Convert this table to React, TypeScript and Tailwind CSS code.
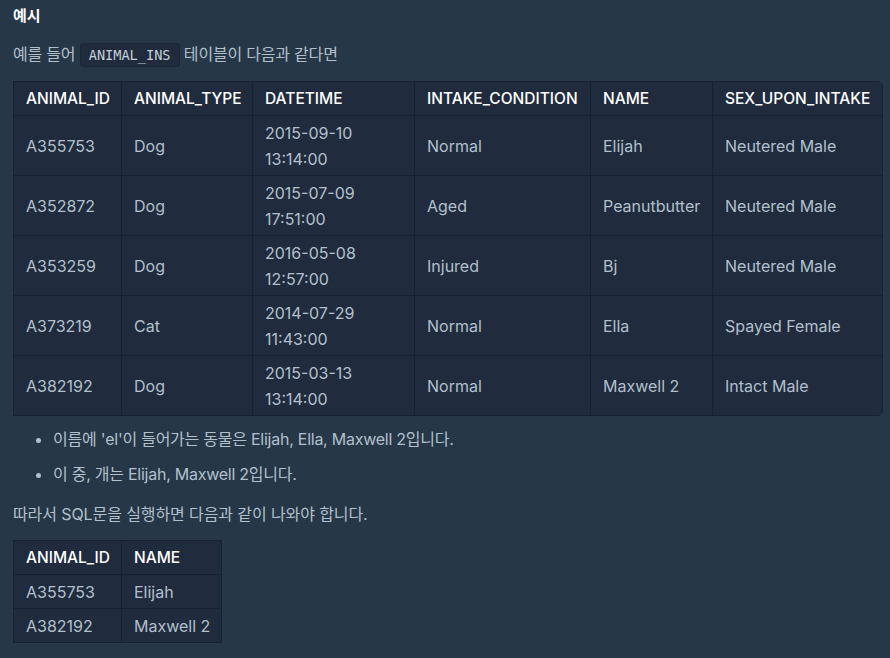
const rows = [
  { id: "A355753", type: "Dog", date: "2015-09-10", time: "13:14:00", cond: "Normal", name: "Elijah", sex: "Neutered Male" },
  { id: "A352872", type: "Dog", date: "2015-07-09", time: "17:51:00", cond: "Aged", name: "Peanutbutter", sex: "Neutered Male" },
  { id: "A353259", type: "Dog", date: "2016-05-08", time: "12:57:00", cond: "Injured", name: "Bj", sex: "Neutered Male" },
  { id: "A373219", type: "Cat", date: "2014-07-29", time: "11:43:00", cond: "Normal", name: "Ella", sex: "Spayed Female" },
  { id: "A382192", type: "Dog", date: "2015-03-13", time: "13:14:00", cond: "Normal", name: "Maxwell 2", sex: "Intact Male" },
];

const headers = ["ANIMAL_ID", "ANIMAL_TYPE", "DATETIME", "INTAKE_CONDITION", "NAME", "SEX_UPON_INTAKE"];
const widths = ["w-[108px]", "w-[131px]", "w-[162px]", "w-[176px]", "w-[122px]", "w-[170px]"];

const th = "border border-[#172130] px-[12px] py-[3.5px] text-left font-medium text-[15.5px] text-white leading-[26px] whitespace-nowrap";
const td = "border border-[#172130] px-[12px] py-[3.5px] text-left leading-[26px] whitespace-nowrap";

export default function App() {
  return (
    <div
      className="min-h-[658px] w-[890px] bg-[#263747] px-[13px] pt-[4px] text-[16px] text-[#b2c0cc]"
      style={{ fontFamily: "Inter, 'Noto Sans CJK KR', sans-serif" }}
    >
      <h5 className="font-bold text-white leading-[24px] text-[15px]">예시</h5>

      <p className="mt-[13px] leading-[26px] tracking-[-0.2px]">
        예를 들어{" "}
        <code className="rounded-[4px] border border-[#1b2636] bg-[#202b3d] px-[8px] py-[3px] font-['DejaVu_Sans_Mono',monospace] text-[13.6px] tracking-normal text-[#c4d0da]">
          ANIMAL_INS
        </code>{" "}
        테이블이 다음과 같다면
      </p>

      <div className="mt-[13px] w-[870px] overflow-hidden rounded-tr-[6px] rounded-br-[6px]">
        <table className="w-[870px] table-fixed border-collapse bg-[#202b3d]">
          <colgroup>
            {widths.map((w, i) => (
              <col key={i} className={w} />
            ))}
          </colgroup>
          <thead>
            <tr>
              {headers.map((h) => (
                <th key={h} className={th}>
                  {h}
                </th>
              ))}
            </tr>
          </thead>
          <tbody>
            {rows.map((r) => (
              <tr key={r.id}>
                <td className={td}>{r.id}</td>
                <td className={td}>{r.type}</td>
                <td className={td}>
                  {r.date}
                  <br />
                  {r.time}
                </td>
                <td className={td}>{r.cond}</td>
                <td className={td}>{r.name}</td>
                <td className={td}>{r.sex}</td>
              </tr>
            ))}
          </tbody>
        </table>
      </div>

      <ul className="mt-[10px] list-disc pl-[40px] leading-[26px] tracking-[-0.25px] marker:text-[#b2c0cc]">
        <li>이름에 'el'이 들어가는 동물은 Elijah, Ella, Maxwell 2입니다.</li>
        <li className="mt-[9px]">이 중, 개는 Elijah, Maxwell 2입니다.</li>
      </ul>

      <p className="mt-[14px] leading-[26px] tracking-[-0.1px]">따라서 SQL문을 실행하면 다음과 같이 나와야 합니다.</p>

      <table className="mt-[13px] w-[208px] table-fixed border-collapse bg-[#202b3d]">
        <colgroup>
          <col className="w-[108px]" />
          <col className="w-[100px]" />
        </colgroup>
        <thead>
          <tr>
            <th className={th}>ANIMAL_ID</th>
            <th className={th}>NAME</th>
          </tr>
        </thead>
        <tbody>
          <tr>
            <td className={td}>A355753</td>
            <td className={td}>Elijah</td>
          </tr>
          <tr>
            <td className={td}>A382192</td>
            <td className={td}>Maxwell 2</td>
          </tr>
        </tbody>
      </table>
    </div>
  );
}
